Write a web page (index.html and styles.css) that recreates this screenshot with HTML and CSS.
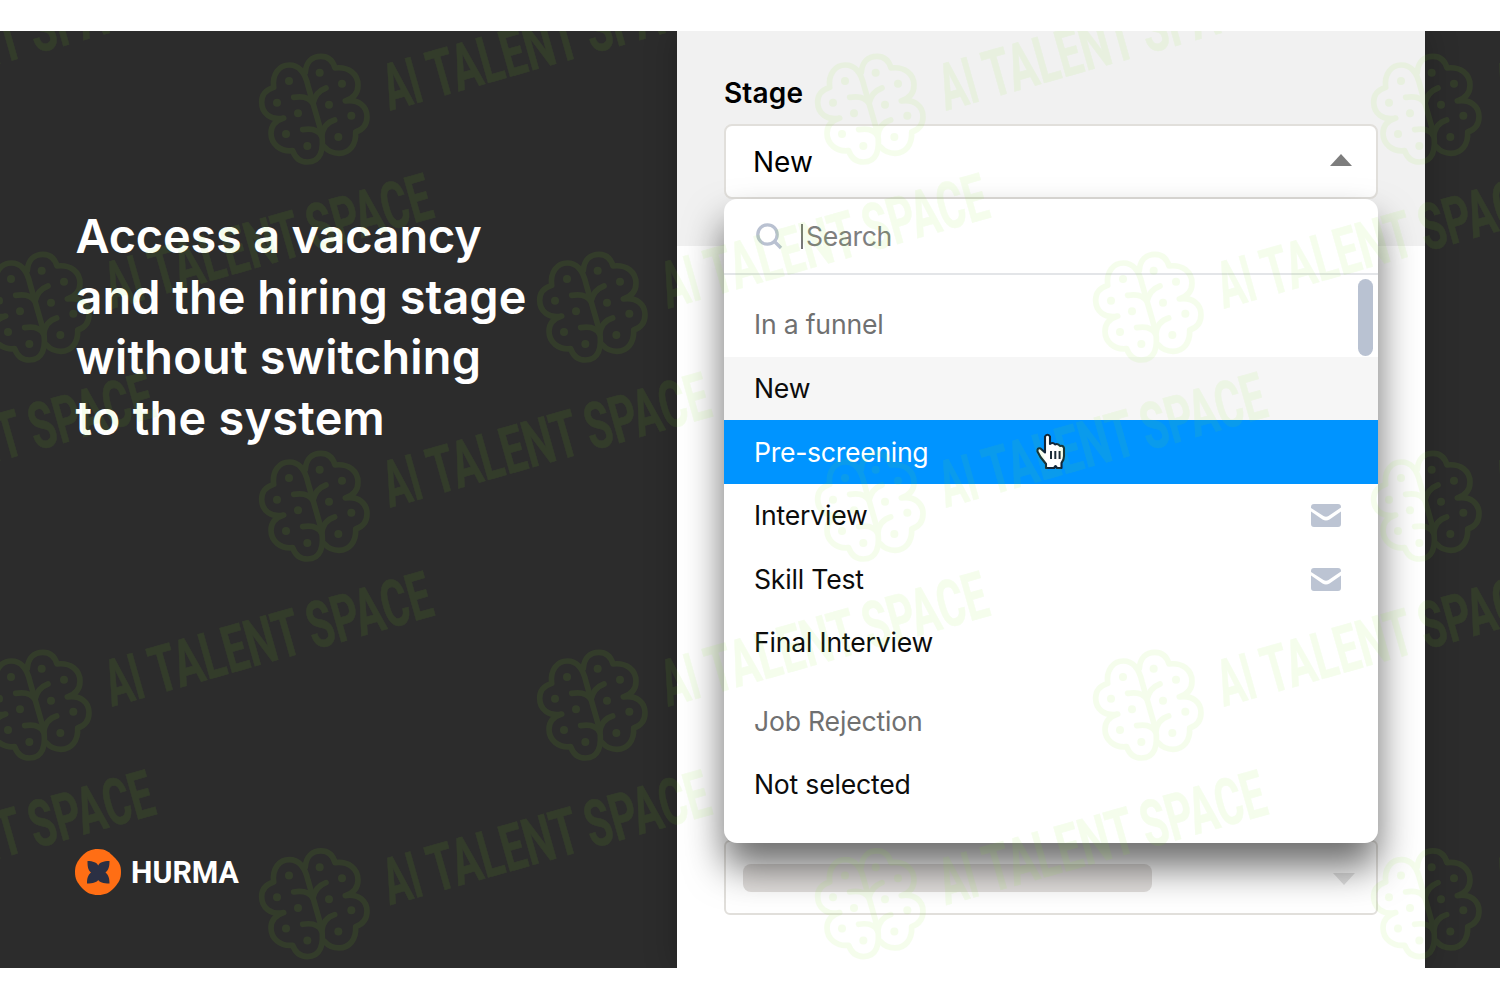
FILE: index.html
```html
<!DOCTYPE html>
<html lang="en">
<head>
<meta charset="utf-8">
<title>Hurma</title>
<link rel="stylesheet" href="styles.css">
</head>
<body>
<main class="banner">
  <section class="intro">
    <h1 class="headline"><span class="l1">Access a vacancy</span><br><span class="l2">and the hiring stage</span><br><span class="l3">without switching</span><br><span class="l4">to the system</span></h1>
    <div class="brand">
      <svg class="brand-mark" viewBox="0 0 46 46">
        <path d="M23 0C31 0 34 3 39 8C44 13 46 16 46 23C46 30 44 33 39 39C34 44 30 46 23 46C16 46 12 44 7 39C2 33 0 30 0 23C0 16 2 13 7 7C12 2 16 0 23 0Z" fill="#ff6e14"/>
        <path d="M12.500 12C18 12 22 13.500 23.200 16.500C24.500 13.500 28 12 34.500 12C34.500 18 33.500 21 30.500 23.500C33.500 26 34.500 29 34.500 34.500C28 34.500 24.500 33 23.200 31C22 33 18 34.500 12 34.500C12 29 13 26 16 23.500C13 21 12.500 18 12.500 12Z" fill="#2b3044"/>
      </svg>
      <svg class="brand-name" viewBox="0 0 112 40"><text x="1" y="31" textLength="108" lengthAdjust="spacingAndGlyphs">HURMA</text></svg>
    </div>
  </section>

  <section class="panel">
    <div class="panel-head">
      <label class="label">Stage</label>
      <div class="field">
        <div class="select">
          <span>New</span>
          <svg class="caret" viewBox="0 0 22 12"><path d="M0 12L11 0L22 12Z" fill="#7d7d7d"/></svg>
        </div>
        <div class="menu">
          <div class="search">
            <svg class="search-icon" viewBox="0 0 27 27" fill="none" stroke="#b9c1d1" stroke-width="3.300"><circle cx="11.500" cy="11.500" r="9.700"/><path d="M18.500 18.500L25 25"/></svg>
            <span class="search-text">Search</span>
          </div>
          <div class="list">
            <div class="group first">In a funnel</div>
            <div class="option current">New</div>
            <div class="option active">Pre-screening</div>
            <div class="option">Interview
              <svg class="mail" viewBox="0 0 30 23"><path d="M0 4V3Q0 0 3 0H27Q30 0 30 3V3.500L17.500 12Q15 13.500 12.500 12ZM0 7.500L11.500 15.500Q15 17.500 18.500 15.500L30 7.500V20Q30 23 27 23H3Q0 23 0 20Z" fill="#bcc4d3"/></svg>
            </div>
            <div class="option">Skill Test
              <svg class="mail" viewBox="0 0 30 23"><path d="M0 4V3Q0 0 3 0H27Q30 0 30 3V3.500L17.500 12Q15 13.500 12.500 12ZM0 7.500L11.500 15.500Q15 17.500 18.500 15.500L30 7.500V20Q30 23 27 23H3Q0 23 0 20Z" fill="#bcc4d3"/></svg>
            </div>
            <div class="option">Final Interview</div>
            <div class="group">Job Rejection</div>
            <div class="option">Not selected</div>
            <div class="thumb"></div>
          </div>
          <svg class="pointer" viewBox="0 0 30 37"><path d="M9 3.500Q11.500 0 14 3.500V11Q17 8.800 19 11.500Q22 10 24 13Q27 12 28 15V23Q28 27 25.500 30V35H21L19.500 33L18 35H10V31L4.500 24L1.500 18.500Q1 14.500 4.500 15.500L9 19.500Z" fill="#fff" stroke="#10263a" stroke-width="2.100" stroke-linejoin="round"/><path d="M15 18V26M19.300 18V26M23.600 18V26" stroke="#1d2c38" stroke-width="2"/></svg>
        </div>
      </div>
    </div>
    <div class="panel-body">
      <div class="select ghost">
        <span class="skeleton"></span>
        <svg class="caret-down" viewBox="0 0 22 12"><path d="M0 0H22L11 12Z" fill="#e2e2e2"/></svg>
      </div>
    </div>
  </section>

  <svg class="watermark" viewBox="0 31 1500 937">
    <defs>
      <g id="stamp">
        <g transform="scale(.33333)">
          <g fill="none" stroke="#86f01e" stroke-width="17" stroke-linecap="round" stroke-linejoin="round">
            <path d="M65 130C60 90 82 63 112 63C145 63 160 90 168 125L208 265C218 318 205 354 166 354C143 354 130 342 122 320C85 324 57 300 57 268C57 246 70 230 95 222C56 230 29 208 29 174C29 150 43 137 65 130"/>
            <path d="M160 85C162 55 180 37 207 37C229 37 243 51 249 72C290 67 318 90 318 124C318 147 305 163 280 171C320 165 345 187 345 218C345 243 331 257 311 264C313 303 292 328 261 328C243 328 230 323 218 309"/>
            <path d="M125 160Q168 153 183 178Q190 144 222 132M152 257Q196 250 209 277Q214 238 248 228"/>
          </g>
          <g fill="#86f01e"><circle cx="111" cy="111" r="12"/><circle cx="203" cy="86" r="12"/><circle cx="270" cy="119" r="12"/><circle cx="75" cy="176" r="12"/><circle cx="231" cy="182" r="12"/><circle cx="138" cy="208" r="12"/><circle cx="298" cy="215" r="12"/><circle cx="102" cy="270" r="12"/><circle cx="259" cy="279" r="12"/><circle cx="166" cy="306" r="12"/></g>
        </g>
        <g class="stamp-text" transform="translate(139 66.500) rotate(-15.800)">
          <text x="-1" textLength="37" lengthAdjust="spacingAndGlyphs">AI</text>
          <text x="46" textLength="154" lengthAdjust="spacingAndGlyphs">TALENT</text>
          <text x="209" textLength="127" lengthAdjust="spacingAndGlyphs">SPACE</text>
        </g>
      </g>
    </defs>
    <use href="#stamp" x="-304" y="44"/><use href="#stamp" x="252" y="44"/><use href="#stamp" x="808" y="44"/><use href="#stamp" x="1364" y="44"/>
    <use href="#stamp" x="-26" y="242"/><use href="#stamp" x="530" y="242"/><use href="#stamp" x="1086" y="242"/>
    <use href="#stamp" x="-304" y="441"/><use href="#stamp" x="252" y="441"/><use href="#stamp" x="808" y="441"/><use href="#stamp" x="1364" y="441"/>
    <use href="#stamp" x="-26" y="640"/><use href="#stamp" x="530" y="640"/><use href="#stamp" x="1086" y="640"/>
    <use href="#stamp" x="-304" y="838.600"/><use href="#stamp" x="252" y="838.600"/><use href="#stamp" x="808" y="838.600"/><use href="#stamp" x="1364" y="838.600"/>
  </svg>
</main>
</body>
</html>
```
FILE: styles.css
```css
* { box-sizing: border-box; }
body {
  margin: 0;
  padding: 31px 0 32px;
  background: #fff;
  font-family: Inter, "Liberation Sans", sans-serif;
}
.banner {
  position: relative;
  display: flex;
  height: 937px;
  background: #2c2c2c;
  overflow: hidden;
}
.intro {
  width: 677.4px;
  padding: 174.600px 0 73px 75px;
  display: flex;
  flex-direction: column;
  justify-content: space-between;
}
.headline {
  margin: 0;
  padding-left: .5px;
  color: #fff;
  font-size: 46.8px;
  font-weight: 600;
  line-height: 60.9px;
  white-space: nowrap;
}
.l1 { letter-spacing: -.15px; }
.l2 { letter-spacing: .08px; }
.l3 { letter-spacing: .24px; }
.l4 { letter-spacing: .28px; }
.brand { display: flex; align-items: center; gap: 9px; }
.brand-mark { width: 46px; height: 46px; }
.brand-name { width: 112px; height: 40px; }
.brand-name text { font: 700 31px Roboto, sans-serif; fill: #fff; }

.panel {
  width: 747.6px;
  background: #fff;
  box-shadow: 0 0 30px rgba(0, 0, 0, .25);
}
.panel-head {
  height: 215px;
  padding: 45px 47px 0 46.600px;
  background: #f1f1f1;
}
.label {
  display: block;
  height: 48px;
  font-size: 28px;
  font-weight: 600;
  line-height: 34px;
  letter-spacing: .15px;
}
.field { position: relative; }
.select {
  display: flex;
  align-items: center;
  justify-content: space-between;
  height: 75px;
  padding: 0 24px 0 27px;
  border: 2px solid #e1dfdb;
  border-radius: 8px;
  background: #fff;
  font-size: 28px;
}
.caret { width: 22px; height: 12px; margin-top: -4px; }
.menu {
  position: absolute;
  z-index: 2;
  top: 75px;
  left: 0;
  width: 654px;
  height: 644px;
  border-radius: 13px;
  background: #fff;
  box-shadow: 0 24px 38px rgba(0, 0, 0, .58);
  font-size: 26.600px;
  letter-spacing: -.2px;
}
.search {
  display: flex;
  align-items: center;
  height: 75.500px;
  padding: 1.500px 0 0 32px;
  border-bottom: 2px solid #e3e5e8;
  color: #7e7e7e;
  letter-spacing: -.4px;
}
.search-icon { width: 27px; height: 27px; margin-right: 18px; }
.search-text { padding-left: 3px; border-left: 2px solid #777; line-height: 25px; }
.list { position: relative; margin-top: -.5px; }
.group, .option { height: 63.600px; line-height: 63.600px; padding-left: 30px; }
.group { margin-top: 15px; color: #707070; }
.group.first { margin-top: 0; padding-top: 19.200px; height: 82.900px; }
.option { display: flex; align-items: center; justify-content: space-between; padding-right: 37px; color: #0c0c0c; }
.option.current { background: #f6f6f6; }
.option.active { background: #0094ff; color: #fff; letter-spacing: -.3px; padding-top: 1px; }
.mail { width: 30px; height: 23px; }
.thumb {
  position: absolute;
  top: 5px;
  right: 5px;
  width: 15px;
  height: 77px;
  border-radius: 8px;
  background: #b9c2d2;
}
.pointer { position: absolute; left: 312px; top: 234px; width: 30px; height: 37px; }
.panel-body { padding: 594px 47px 0 46.600px; }
.select.ghost { padding: 0 21px 0 17px; border-radius: 6px; }
.skeleton { width: 409px; height: 28px; border-radius: 8px; background: #e2dfdd; }
.caret-down { width: 22px; height: 12px; margin-top: 3px; }

.watermark {
  position: absolute;
  z-index: 3;
  inset: 0;
  width: 1500px;
  height: 937px;
  opacity: .078;
  pointer-events: none;
}
.stamp-text { font: 700 65px Roboto, sans-serif; fill: #86f01e; stroke: #86f01e; stroke-width: .6; }
```
